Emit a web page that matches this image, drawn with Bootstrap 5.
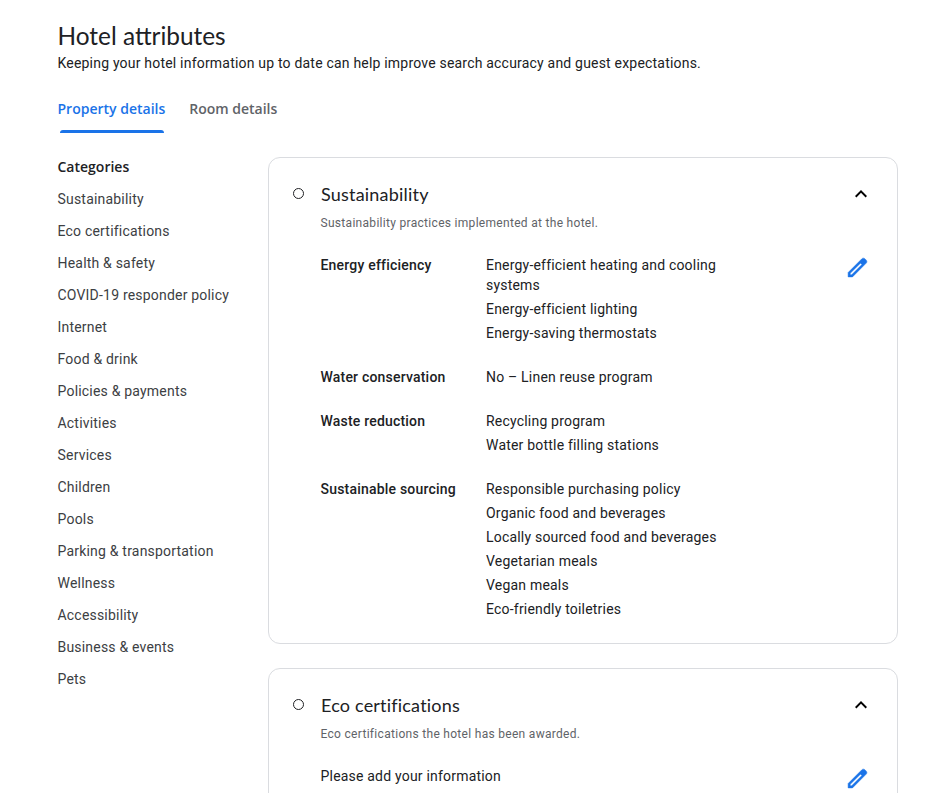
<!DOCTYPE html>
<html lang="en">
<head>
<meta charset="utf-8">
<title>Hotel attributes</title>
<link href="https://cdn.jsdelivr.net/npm/bootstrap@5.3.0/dist/css/bootstrap.min.css" rel="stylesheet">
<style>
html, body { height: 793px; overflow: hidden; }
body { font-family: Roboto, "Liberation Sans", sans-serif; font-size: 14px; line-height: 20px; color: #202124; background: #fff; letter-spacing: .2px; }
.page-wrap { padding: 21px 40px 0 57.5px; }
.page-title { font-family: Lato, Roboto, sans-serif; font-size: 24.4px; line-height: 30px; font-weight: 400; margin: 0; letter-spacing: 0; }
.page-sub { margin: 2px 0 0; height: 20px; }
.tab-row { margin-top: 17px; gap: 24px; height: 43px; }
.tab-item { font-family: "Open Sans", Roboto, sans-serif; font-size: 14px; font-weight: 600; line-height: 20px; padding-top: 9px; color: #5f6368; letter-spacing: 0; }
.tab-item.is-on { color: #1a73e8; position: relative; }
.tab-item.is-on::after { content: ""; position: absolute; left: 2.5px; right: 1.5px; bottom: 0; height: 3px; background: #1a73e8; border-radius: 3px 3px 0 0; }
.layout-row { margin-top: 24px; }
.side-col { width: 210.5px; flex: none; }
.side-head { font-family: "Open Sans", Roboto, sans-serif; font-weight: 600; font-size: 14px; line-height: 20px; height: 20px; letter-spacing: 0; }
.side-link { display: block; margin-top: 12px; color: #3c4043; text-decoration: none; }
.attr-card { width: 630px; border: 1px solid #dadce0; border-radius: 12px; padding: 24px; margin-bottom: 24px; }
.card-head { height: 24px; }
.dot-mark { width: 11px; height: 11px; border: 1.5px solid #202124; border-radius: 50%; flex: none; margin: -2px 17px 0 0; }
.card-name { font-family: Lato, Roboto, sans-serif; font-size: 18px; line-height: 24px; font-weight: 400; margin: 0; flex: 1; }
.card-note { font-size: 12px; line-height: 16px; color: #5f6368; margin: 9px 0 0 27.5px; letter-spacing: .3px; }
.attr-list { margin: 24px 0 0 27.5px; }
.attr-group { display: flex; margin-bottom: 24px; }
.attr-group:last-child { margin-bottom: 0; }
.attr-key { width: 165.5px; flex: none; font-weight: 500; }
.attr-val { width: 240px; }
.attr-val div + div { margin-top: 4px; }
.edit-btn { margin-left: auto; height: 20px; margin-right: 3px; }
.edit-btn svg { display: block; }
.edit-btn path { stroke: #1a73e8; stroke-width: .5; }
.plain-line { margin: 24px 0 0 27.5px; }
</style>
</head>
<body>
<div class="page-wrap">
  <h1 class="page-title">Hotel attributes</h1>
  <p class="page-sub">Keeping your hotel information up to date can help improve search accuracy and guest expectations.</p>
  <div class="d-flex tab-row">
    <div class="tab-item is-on">Property details</div>
    <div class="tab-item">Room details</div>
  </div>
  <div class="d-flex layout-row">
    <nav class="side-col">
      <div class="side-head">Categories</div>
      <a class="side-link" href="#">Sustainability</a>
      <a class="side-link" href="#">Eco certifications</a>
      <a class="side-link" href="#">Health &amp; safety</a>
      <a class="side-link" href="#">COVID-19 responder policy</a>
      <a class="side-link" href="#">Internet</a>
      <a class="side-link" href="#">Food &amp; drink</a>
      <a class="side-link" href="#">Policies &amp; payments</a>
      <a class="side-link" href="#">Activities</a>
      <a class="side-link" href="#">Services</a>
      <a class="side-link" href="#">Children</a>
      <a class="side-link" href="#">Pools</a>
      <a class="side-link" href="#">Parking &amp; transportation</a>
      <a class="side-link" href="#">Wellness</a>
      <a class="side-link" href="#">Accessibility</a>
      <a class="side-link" href="#">Business &amp; events</a>
      <a class="side-link" href="#">Pets</a>
    </nav>
    <main>
      <section class="attr-card">
        <div class="d-flex align-items-center card-head">
          <span class="dot-mark"></span>
          <h2 class="card-name">Sustainability</h2>
          <svg width="24" height="24" viewBox="0 0 24 24" fill="#000"><path d="M12 8l-6 6 1.41 1.41L12 10.83l4.59 4.58L18 14z"/></svg>
        </div>
        <p class="card-note">Sustainability practices implemented at the hotel.</p>
        <div class="attr-list">
          <div class="attr-group">
            <div class="attr-key">Energy efficiency</div>
            <div class="attr-val">
              <div>Energy-efficient heating and cooling systems</div>
              <div>Energy-efficient lighting</div>
              <div>Energy-saving thermostats</div>
            </div>
            <div class="edit-btn"><svg width="25" height="25" viewBox="0 0 24 24" fill="#1a73e8"><path d="M20.41 4.94l-1.35-1.35c-.78-.78-2.05-.78-2.83 0L3 16.82V21h4.18L20.41 7.77c.79-.78.79-2.05 0-2.83zM6.41 19.06L5 19v-1.36l9.82-9.82 1.41 1.41-9.82 9.83z"/></svg></div>
          </div>
          <div class="attr-group">
            <div class="attr-key">Water conservation</div>
            <div class="attr-val"><div>No – Linen reuse program</div></div>
          </div>
          <div class="attr-group">
            <div class="attr-key">Waste reduction</div>
            <div class="attr-val">
              <div>Recycling program</div>
              <div>Water bottle filling stations</div>
            </div>
          </div>
          <div class="attr-group">
            <div class="attr-key">Sustainable sourcing</div>
            <div class="attr-val">
              <div>Responsible purchasing policy</div>
              <div>Organic food and beverages</div>
              <div>Locally sourced food and beverages</div>
              <div>Vegetarian meals</div>
              <div>Vegan meals</div>
              <div>Eco-friendly toiletries</div>
            </div>
          </div>
        </div>
      </section>
      <section class="attr-card">
        <div class="d-flex align-items-center card-head">
          <span class="dot-mark"></span>
          <h2 class="card-name">Eco certifications</h2>
          <svg width="24" height="24" viewBox="0 0 24 24" fill="#000"><path d="M12 8l-6 6 1.41 1.41L12 10.83l4.59 4.58L18 14z"/></svg>
        </div>
        <p class="card-note">Eco certifications the hotel has been awarded.</p>
        <div class="d-flex plain-line">
          <div>Please add your information</div>
          <div class="edit-btn"><svg width="25" height="25" viewBox="0 0 24 24" fill="#1a73e8"><path d="M20.41 4.94l-1.35-1.35c-.78-.78-2.05-.78-2.83 0L3 16.82V21h4.18L20.41 7.77c.79-.78.79-2.05 0-2.83zM6.41 19.06L5 19v-1.36l9.82-9.82 1.41 1.41-9.82 9.83z"/></svg></div>
        </div>
      </section>
    </main>
  </div>
</div>
<script src="https://cdn.jsdelivr.net/npm/bootstrap@5.3.0/dist/js/bootstrap.bundle.min.js"></script>
</body>
</html>
